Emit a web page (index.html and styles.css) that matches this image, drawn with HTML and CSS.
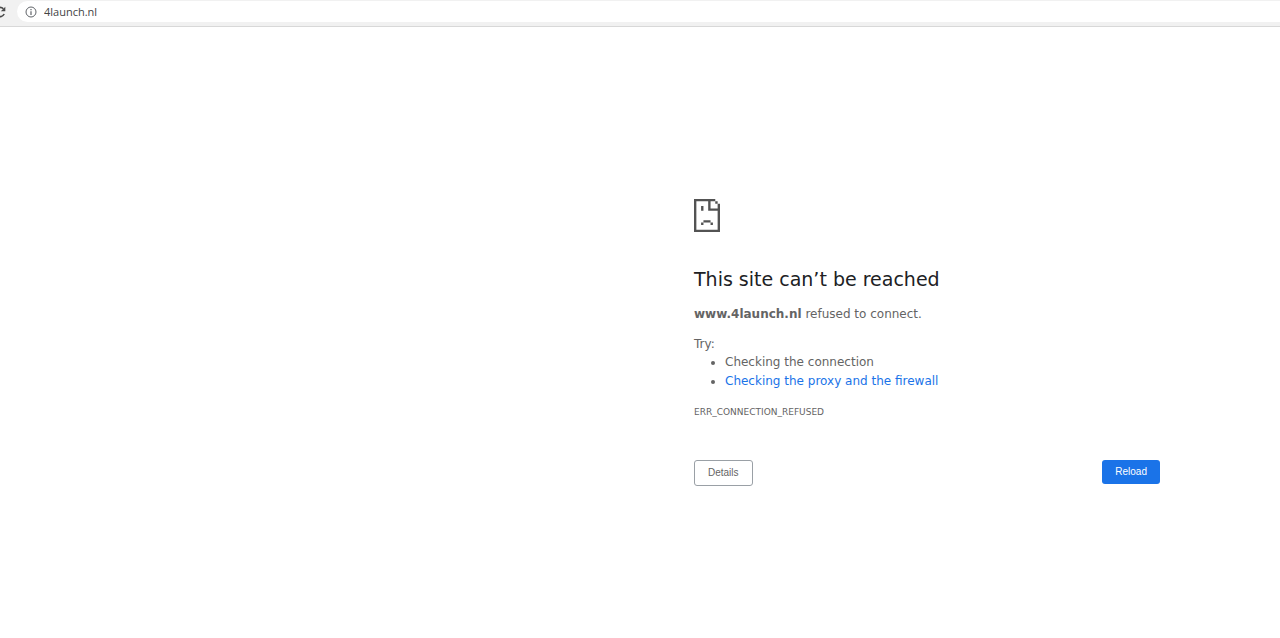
FILE: index.html
```html
<!DOCTYPE html>
<html lang="en">
<head>
  <meta charset="UTF-8">
  <meta name="viewport" content="width=device-width, initial-scale=1.0">
  <title>4launch.nl</title>
  <link rel="stylesheet" href="styles.css">
</head>
<body>

  <header class="toolbar">
    <button class="refresh" type="button" aria-label="Reload this page">
      <svg width="12" height="12" viewBox="0 0 12 12" fill="none" stroke="#4a4a4a" stroke-width="1.6">
        <path d="M10.2 8A4.6 4.6 0 1 1 9.4 2.8"/>
        <path d="M11.3 0.8V5.3H6.8z" fill="#4a4a4a" stroke="none"/>
      </svg>
    </button>
    <div class="address-bar">
      <svg width="12" height="12" viewBox="0 0 12 12" fill="none" stroke="#5f6368">
        <circle cx="6" cy="6" r="5"/>
        <path d="M6 5.2V9M6 3V4.2" stroke-width="1.2"/>
      </svg>
      <input class="address" type="text" value="4launch.nl" aria-label="Address">
    </div>
  </header>

  <main class="error-page">
    <svg class="error-icon" width="26" height="33" viewBox="0 0 11 14" preserveAspectRatio="none" fill="#535353">
      <path d="M0 0H9V1H10V2H11V14H0zM1 1V13H10V5H6V1zM7 1V4H10V2H9V1z" fill-rule="evenodd"/>
      <path d="M3 3H4V5H3zM4 9H7V10H4zM3 10H4V11H3zM7 10H8V11H7z"/>
    </svg>
    <h1>This site can’t be reached</h1>
    <p><strong>www.4launch.nl</strong> refused to connect.</p>
    <div class="suggestions">
      <p>Try:</p>
      <ul>
        <li>Checking the connection</li>
        <li><a href="#buttons">Checking the proxy and the firewall</a></li>
      </ul>
    </div>
    <div class="error-code">ERR_CONNECTION_REFUSED</div>
    <div class="buttons" id="buttons">
      <button class="button" type="button">Details</button>
      <button class="button primary" type="button" onclick="location.reload()">Reload</button>
    </div>
  </main>

</body>
</html>
```

FILE: styles.css
```css
body {
  margin: 0;
  background-color: #fff;
  color: #646464;
  font-family: "DejaVu Sans", sans-serif;
  font-size: 12px;
  line-height: 18px;
}

.toolbar {
  display: flex;
  align-items: center;
  gap: 11px;
  height: 26px;
  background-color: #f1f1f1;
  border-bottom: 1px solid #d8d8d8;
  overflow: hidden;
}

.refresh {
  display: flex;
  flex: none;
  width: 6px;
  justify-content: flex-end;
  padding: 0 0 3px;
  border: none;
  background: none;
}

.refresh svg,
.address-bar svg {
  flex: none;
}

.address-bar {
  display: flex;
  flex: 1;
  align-items: center;
  gap: 7px;
  height: 21px;
  margin-bottom: 3px;
  padding-left: 8px;
  background-color: #fff;
  border-radius: 11px 0 0 11px;
}

.address {
  flex: 1;
  padding: 0 0 1px;
  border: none;
  outline: none;
  background: none;
  color: #444;
  font-family: "Open Sans", sans-serif;
  font-size: 11px;
}

.error-page {
  max-width: 466px;
  margin: 172px 120px 0 auto;
}

.error-icon {
  display: block;
}

h1 {
  margin: 35px 0 14px;
  color: #202124;
  font-size: 19px;
  font-weight: 500;
  line-height: 24px;
}

p {
  margin: 0;
}

.suggestions {
  margin-top: 12px;
}

ul {
  margin: 0;
  padding-left: 31px;
}

li {
  line-height: 19px;
}

a {
  color: #1a73e8;
  text-decoration: none;
}

.error-code {
  margin-top: 12px;
  font-size: 9px;
}

.buttons {
  display: flex;
  align-items: flex-start;
  justify-content: space-between;
  margin-top: 39px;
}

.button {
  padding: 5px 13px;
  border: 1px solid #9aa0a6;
  border-radius: 3px;
  background-color: #fff;
  color: #646464;
  font-family: "Liberation Sans", Arial, sans-serif;
  font-size: 10px;
  line-height: 14px;
  cursor: pointer;
}

.primary {
  border: none;
  background-color: #1a73e8;
  color: #fff;
}
```
